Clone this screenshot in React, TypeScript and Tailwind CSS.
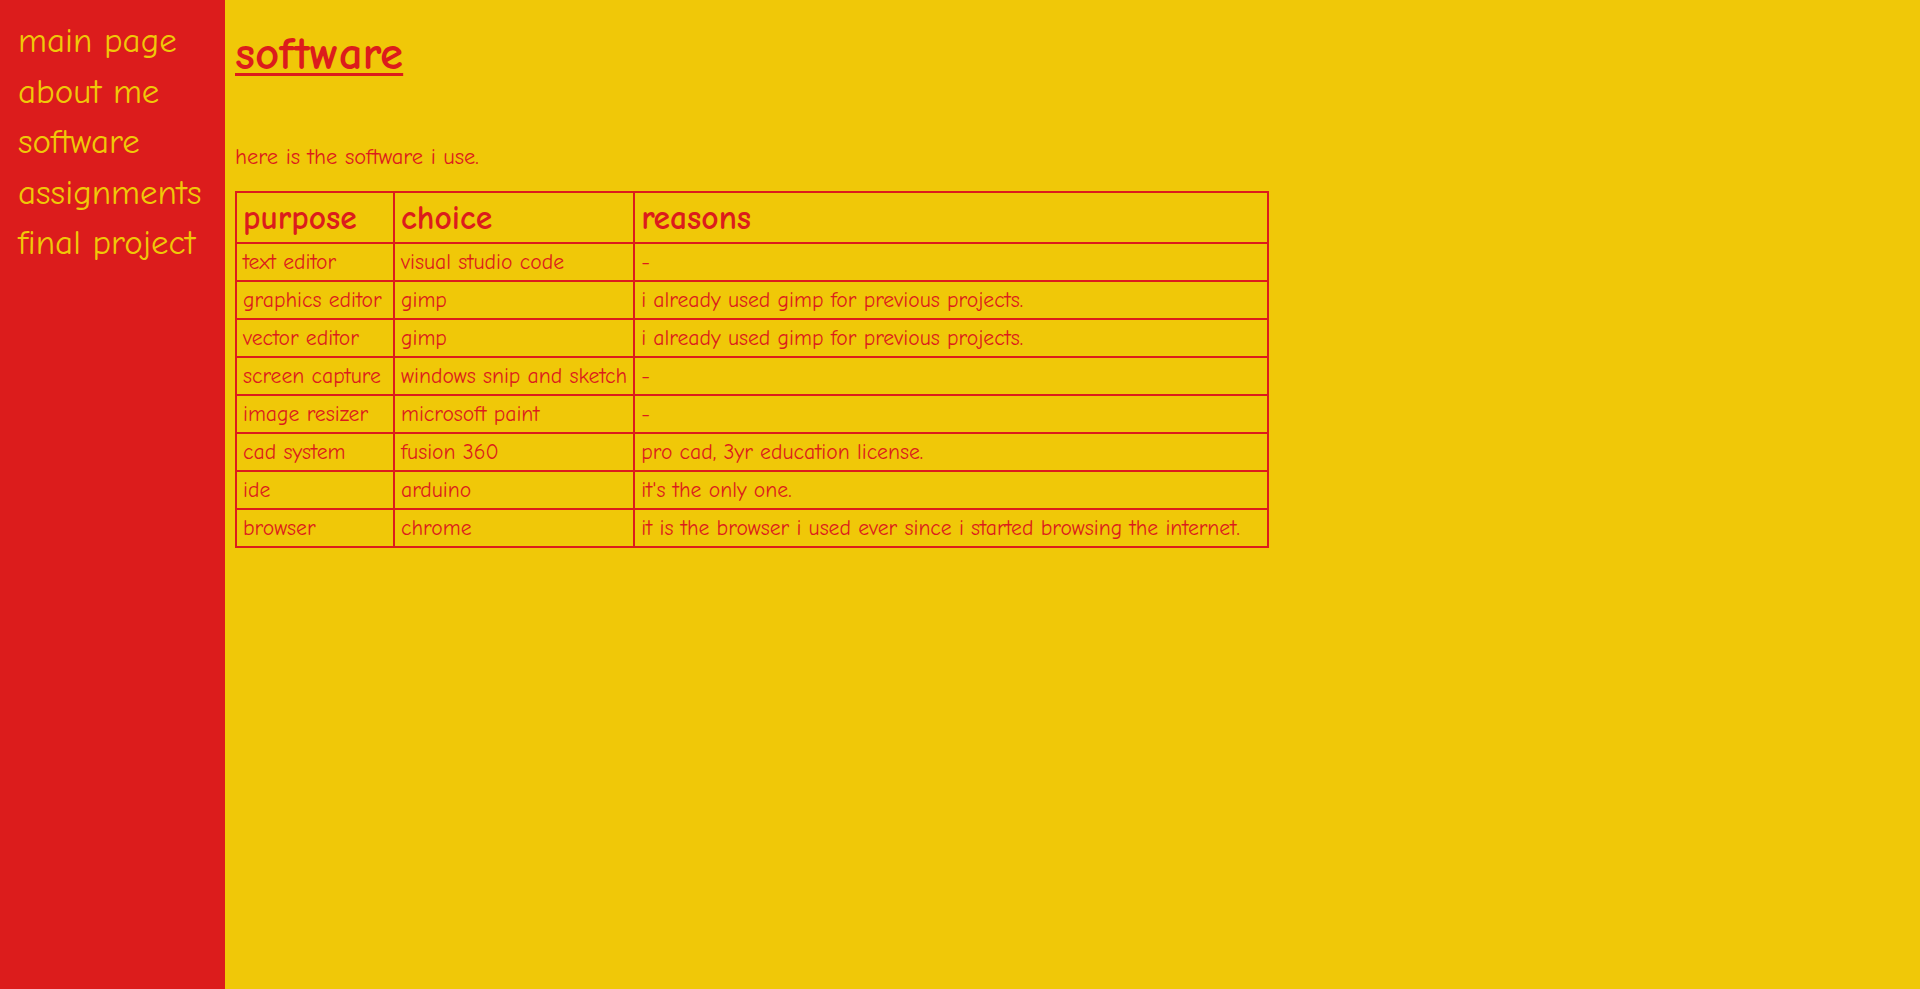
const navItems = ["main page", "about me", "software", "assignments", "final project"];

const rows: [string, string, string][] = [
  ["text editor", "visual studio code", "-"],
  ["graphics editor", "gimp", "i already used gimp for previous projects."],
  ["vector editor", "gimp", "i already used gimp for previous projects."],
  ["screen capture", "windows snip and sketch", "-"],
  ["image resizer", "microsoft paint", "-"],
  ["cad system", "fusion 360", "pro cad, 3yr education license."],
  ["ide", "arduino", "it's the only one."],
  ["browser", "chrome", "it is the browser i used ever since i started browsing the internet."],
];

export default function App() {
  return (
    <div className="flex min-h-[989px] bg-[#f0c808] font-['Comic_Sans_MS','Comic_Neue','DejaVu_Sans',cursive]">
      <nav className="w-[225px] shrink-0 bg-[#dc1c1c] pl-[18px] pt-[20px]">
        {navItems.map((item) => (
          <div key={item} className="h-[50.5px] text-[35px] leading-[42px] text-[#f0c808]">
            {item}
          </div>
        ))}
      </nav>

      <main className="pl-[10px] text-[#dc1c1c]">
        <h1 className="mt-[28px] text-[47px] font-bold leading-[52px] underline decoration-[3px] underline-offset-4">
          software
        </h1>
        <p className="mt-[64px] text-[22.5px] leading-[26px]">here is the software i use.</p>

        <table className="mt-[21px] table-fixed border-collapse border-2 border-[#dc1c1c] text-[21.7px] leading-[26px]">
          <thead>
            <tr className="h-[51px]">
              <th className="w-[158px] border-2 border-[#dc1c1c] px-[6px] text-left text-[33.5px] font-bold">purpose</th>
              <th className="w-[240px] border-2 border-[#dc1c1c] px-[6px] text-left text-[33.5px] font-bold">choice</th>
              <th className="w-[634px] border-2 border-[#dc1c1c] px-[6px] text-left text-[33.5px] font-bold">reasons</th>
            </tr>
          </thead>
          <tbody>
            {rows.map(([purpose, choice, reason]) => (
              <tr key={purpose} className="h-[38px]">
                <td className="border-2 border-[#dc1c1c] px-[6px] whitespace-nowrap">{purpose}</td>
                <td className="border-2 border-[#dc1c1c] px-[6px] whitespace-nowrap">{choice}</td>
                <td className="border-2 border-[#dc1c1c] px-[6px] whitespace-nowrap">{reason}</td>
              </tr>
            ))}
          </tbody>
        </table>
      </main>
    </div>
  );
}
